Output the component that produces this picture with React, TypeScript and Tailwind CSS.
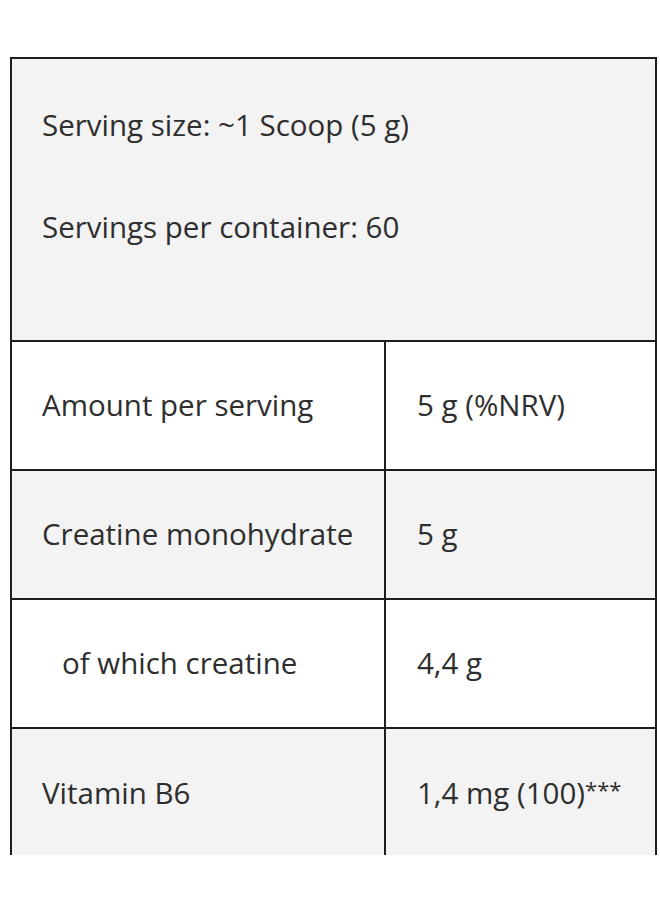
import React from "react";

const font = { fontFamily: '"Open Sans", "Noto Sans", sans-serif' };

function Row({ left, right, grey, indent, last }: { left: string; right: React.ReactNode; grey?: boolean; indent?: boolean; last?: boolean }) {
  return (
    <div className={`flex border-t-2 border-[#1e1e1e] ${last ? "h-[130px]" : "h-[129px]"} ${grey ? "bg-[#f3f3f3]" : "bg-white"}`}>
      <div className={`w-[372px] shrink-0 flex items-center ${indent ? "pl-[50px]" : "pl-[30px]"}`}>
        <span>{left}</span>
      </div>
      <div className="w-[2px] bg-[#1e1e1e] shrink-0" />
      <div className="flex-1 flex items-center pl-[31px]">
        <span className="whitespace-nowrap">{right}</span>
      </div>
    </div>
  );
}

export default function App() {
  return (
    <div className="w-[660px] h-[904px] bg-white pt-[57px] pl-[10px]">
      <div
        className="w-[647px] h-[798px] overflow-hidden border-2 border-b-0 border-[#1e1e1e] text-[29.5px] text-[#2e2e2e]"
        style={font}
      >
        <div className="h-[281px] bg-[#f3f3f3] pl-[30px] pt-[46px]">
          <div className="leading-[40px] whitespace-nowrap">Serving size: ~1 Scoop (5 g)</div>
          <div className="leading-[40px] mt-[62px] whitespace-nowrap">Servings per container: 60</div>
        </div>
        <Row left="Amount per serving" right="5 g (%NRV)" />
        <Row left="Creatine monohydrate" right="5 g" grey />
        <Row left="of which creatine" right="4,4 g" indent />
        <Row
          left="Vitamin B6"
          right={
            <>
              1,4 mg (100)
              <span className="text-[22px] relative -top-[6px]">***</span>
            </>
          }
          grey
          last
        />
      </div>
    </div>
  );
}
